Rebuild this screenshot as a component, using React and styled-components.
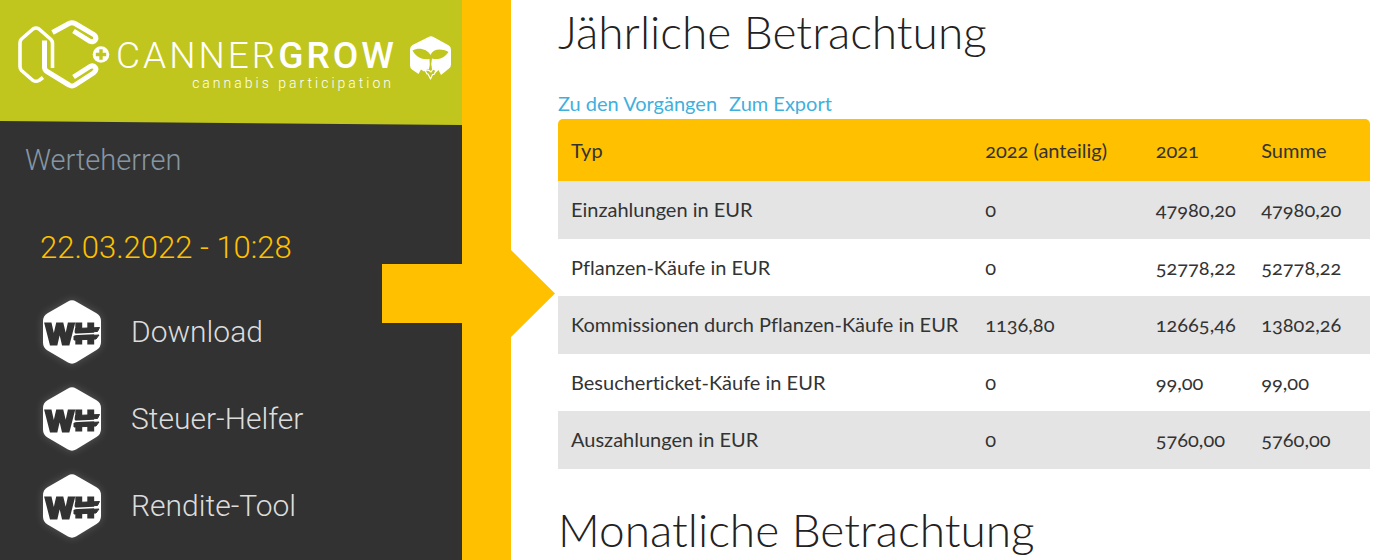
import React from "react";
import styled, { createGlobalStyle } from "styled-components";

const lime = "#c0c61d";
const amber = "#ffc000";
const dark = "#323232";

const GlobalStyle = createGlobalStyle`
  * { box-sizing: border-box; }
  body { margin: 0; background: #fff; overflow: hidden; }
`;

const Page = styled.div`
  display: grid;
  grid-template-columns: 33% 49px 1fr;
  min-height: 100vh;
  font-family: Lato, "Open Sans", sans-serif;
  font-variant-ligatures: none;
`;

const Sidebar = styled.aside`
  background: ${dark};
  color: #dcdcdc;
  font-family: Roboto, "Liberation Sans", sans-serif;
  font-weight: 300;
`;

const Brand = styled.header`
  display: flex;
  align-items: flex-start;
  height: 125px;
  padding: 18px 0 0 16px;
  background: ${lime};
  color: #fff;
  clip-path: polygon(0 0, 100% 0, 100% 100%, 0 calc(100% - 4px));
`;

const BrandName = styled.div`
  display: flex;
  flex-direction: column;
  width: 282px;
  margin-right: 16px;
  padding: 18px 0 0 4px;
`;

const BrandTitle = styled.div`
  font-size: 37px;
  line-height: 40px;
  letter-spacing: 3px;
  white-space: nowrap;
`;

const BrandStrong = styled.strong`
  font-weight: 500;
`;

const BrandClaim = styled.div`
  align-self: flex-end;
  font-size: 14px;
  line-height: 14px;
  letter-spacing: 3px;
  white-space: nowrap;
`;

const LeafMark = styled.svg`
  margin-top: 17px;
`;

const UserName = styled.div`
  padding: 18px 25px 0;
  color: #8796a3;
  font-size: 29px;
  line-height: 34px;
`;

const Timestamp = styled.time`
  display: block;
  padding: 54px 40px 0;
  color: ${amber};
  font-size: 31px;
  line-height: 34px;
`;

const Nav = styled.nav`
  display: flex;
  flex-direction: column;
  gap: 17px;
  padding: 32px 37px 0;
`;

const NavLink = styled.a`
  display: flex;
  align-items: center;
  gap: 24px;
  height: 70px;
  color: inherit;
  font-size: 30px;
  text-decoration: none;
`;

const NavLabel = styled.span`
  padding-bottom: 2px;
`;

const HexIcon = styled.svg`
  overflow: visible;
  filter: drop-shadow(0 0 4px rgba(255, 255, 255, 0.2));
`;

const Divider = styled.div`
  position: relative;
  background: ${amber};
`;

const Arrow = styled.div`
  position: absolute;
  top: 250px;
  left: -80px;
  width: 173px;
  height: 87px;
  background: ${amber};
  clip-path: polygon(0 14px, 129px 14px, 129px 0, 100% 50%, 129px 100%, 129px 73px, 0 73px);
`;

const Main = styled.main`
  padding: 3px 30px 0 47px;
  color: #222;
`;

const Heading = styled.h1`
  margin: 0;
  font-size: 46px;
  font-weight: 300;
  line-height: 58px;
  white-space: nowrap;
`;

const Links = styled.div`
  display: flex;
  gap: 12px;
  padding: 28px 0 2px;
  font-size: 20px;
  line-height: 28px;
`;

const TextLink = styled.a`
  color: #3fb0de;
  text-decoration: none;
`;

const Table = styled.table`
  width: 100%;
  margin-bottom: 32px;
  border-spacing: 0;
  table-layout: fixed;
  color: #333;
  font-size: 20px;
  font-variant-numeric: oldstyle-nums;
`;

const HeadCell = styled.th`
  width: ${(p) => p.$width};
  height: 62px;
  padding: 0 13px;
  background: ${amber};
  font-weight: 400;
  text-align: left;
  white-space: nowrap;

  &:first-child { border-top-left-radius: 5px; }
  &:last-child { border-top-right-radius: 5px; }
`;

const Row = styled.tr`
  height: ${(p) => (p.$shaded ? 58 : 57)}px;
  background: ${(p) => (p.$shaded ? "#e4e4e4" : "#fff")};
`;

const Cell = styled.td`
  padding: 0 13px 2px;
  white-space: nowrap;
`;

const columns = [
  { label: "Typ", width: "51%" },
  { label: "2022 (anteilig)", width: "21%" },
  { label: "2021", width: "13%" },
  { label: "Summe", width: "15%" },
];

const rows = [
  ["Einzahlungen in EUR", "0", "47980,20", "47980,20"],
  ["Pflanzen-Käufe in EUR", "0", "52778,22", "52778,22"],
  ["Kommissionen durch Pflanzen-Käufe in EUR", "1136,80", "12665,46", "13802,26"],
  ["Besucherticket-Käufe in EUR", "0", "99,00", "99,00"],
  ["Auszahlungen in EUR", "0", "5760,00", "5760,00"],
];

const tools = ["Download", "Steuer-Helfer", "Rendite-Tool"];

function MoleculeLogo() {
  return (
    <svg width="96" height="72" viewBox="16 18 96 72" fill="none" stroke="#fff" strokeLinejoin="round" aria-hidden="true">
      <path strokeWidth="3.6" d="M43 77.5l-4 3q-3 1.500-6 0L21.500 70.500q-1.500-1.500-1.500-4V43q0-2.500 1.500-4L33 29q3-2 6 0l12 10.500q1.500 1.500 1.500 4V68" />
      <path strokeWidth="5" d="M52.500 32.500L69 23.500q3-1.500 6 0l18.500 10.800c5 3.500 1 9-3.500 7L73.500 31" />
      <path strokeWidth="5" d="M44.500 40.500V67q0 3 2.500 4.500L69 85q3 2 6 0l18.500-12c5-4 1-8.500-3.500-6.500L73.500 77" />
      <circle cx="101" cy="54.500" r="8.300" fill="#fff" stroke="none" />
      <path stroke={lime} strokeWidth="3.400" d="M101 49.300v10.400M95.800 54.500h10.400" />
    </svg>
  );
}

function Leaf() {
  return (
    <LeafMark width="42" height="46" viewBox="0 0 42 46" aria-hidden="true">
      <path fill="#fff" d="M18.500 2q2.500-1.500 5 0l15 8.300q2.500 1.400 2.500 4.200v15q0 2.500-2 4l-8 6.500-2.500-5-3.500 3.500-3-4h-5l-3 2-3-2-2.500 4.500-6.500-4.500q-2-1.500-2-4v-16q0-3 2.500-4.500z" />
      <path fill={lime} d="M2.500 15.500C9 12 17 14 20.500 20 23 14 31 13 38.500 17 34 24 27 25 22 23.500q-1.500 5.500 0 10.500v6l-3.500-4q2-6 1-12C12 25 6 22 2.500 15.500z" />
      <path fill={lime} stroke="#fff" strokeWidth="1.200" strokeLinejoin="round" d="M15 35l2 4 1 0 2.500 5 2-4.500 1.500 0 2-4-3-1.500-2 3-2-1.500z" />
    </LeafMark>
  );
}

function ToolIcon() {
  return (
    <HexIcon width="70" height="70" viewBox="0 0 70 70" aria-hidden="true">
      <path fill="#fff" d="M31 4.500q4-2.300 8 0l20.500 11.800q4.500 2.700 4.500 8V45q0 5.300-4.500 8L39 65.500q-4 2.300-8 0L10.500 53.500Q6 50.800 6 45.500V24.300q0-5.300 4.500-8z" />
      <g fill={dark} stroke={dark} fontFamily="Liberation Sans, sans-serif" fontWeight="700">
        <text x="9" y="47" fontSize="29" strokeWidth="3">W</text>
        <text x="38" y="46" fontSize="27" strokeWidth="3">H</text>
        <path strokeWidth="1" d="M38.500 31.500l24-1-2 4-22.500 1zM37 39l25-1-3 4-22 1z" />
        <path fill="none" stroke="#fff" strokeWidth="1.400" d="M36 37.500l26-1.300" />
      </g>
    </HexIcon>
  );
}

export default function App() {
  return (
    <>
      <GlobalStyle />
      <Page>
        <Sidebar>
          <Brand>
            <MoleculeLogo />
            <BrandName>
              <BrandTitle>CANNER<BrandStrong>GROW</BrandStrong></BrandTitle>
              <BrandClaim>cannabis participation</BrandClaim>
            </BrandName>
            <Leaf />
          </Brand>
          <UserName>Werteherren</UserName>
          <Timestamp dateTime="2022-03-22T10:28">22.03.2022 - 10:28</Timestamp>
          <Nav>
            {tools.map((name) => (
              <NavLink href="#" key={name}>
                <ToolIcon />
                <NavLabel>{name}</NavLabel>
              </NavLink>
            ))}
          </Nav>
        </Sidebar>
        <Divider>
          <Arrow />
        </Divider>
        <Main>
          <Heading>Jährliche Betrachtung</Heading>
          <Links>
            <TextLink href="#">Zu den Vorgängen</TextLink>
            <TextLink href="#">Zum Export</TextLink>
          </Links>
          <Table>
            <thead>
              <tr>
                {columns.map((c) => (
                  <HeadCell key={c.label} scope="col" $width={c.width}>{c.label}</HeadCell>
                ))}
              </tr>
            </thead>
            <tbody>
              {rows.map((row, i) => (
                <Row key={row[0]} $shaded={i % 2 === 0}>
                  {row.map((value, j) => (
                    <Cell key={j}>{value}</Cell>
                  ))}
                </Row>
              ))}
            </tbody>
          </Table>
          <Heading as="h2">Monatliche Betrachtung</Heading>
        </Main>
      </Page>
    </>
  );
}
